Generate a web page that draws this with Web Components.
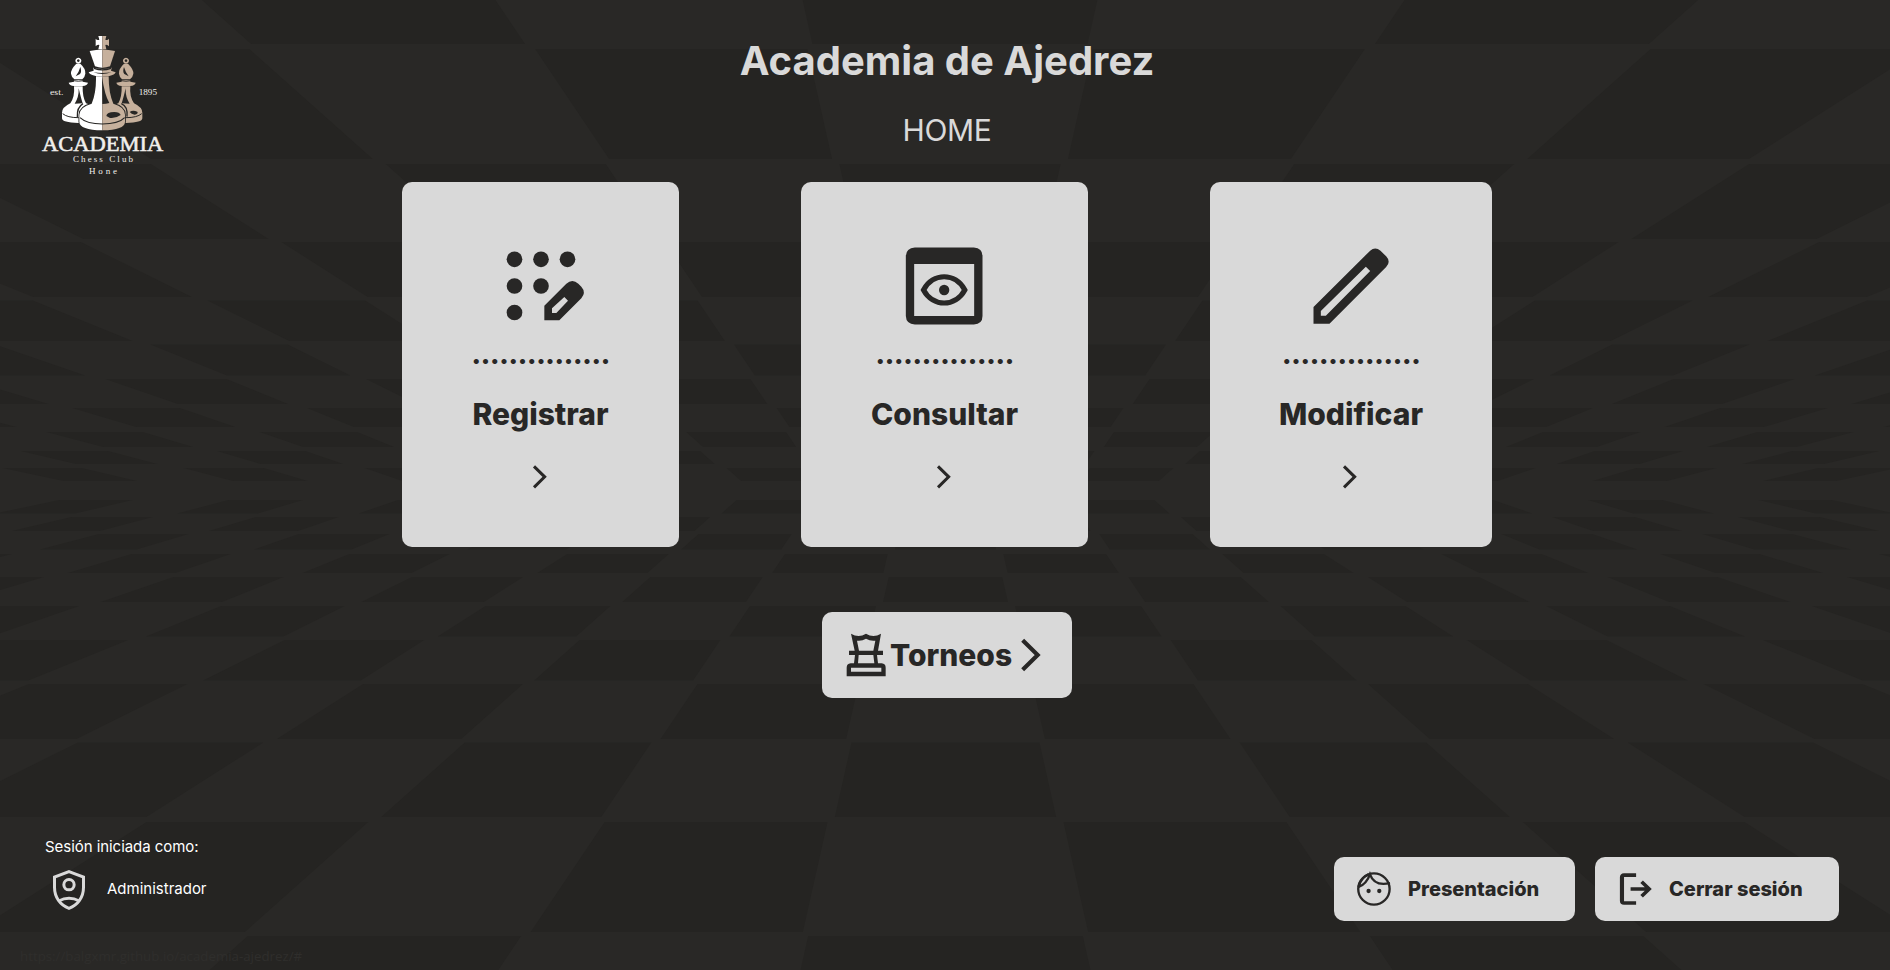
<!DOCTYPE html>
<html lang="es">
<head>
<meta charset="utf-8">
<title>Academia de Ajedrez</title>
<style>
  html, body { margin: 0; height: 100%; background: #292826; overflow: hidden; }
  body { font-family: Inter, "Liberation Sans", sans-serif; }
</style>
</head>
<body>
<home-page></home-page>

<template id="t-logo">
  <style>
    :host { display: block; width: 150px; height: 165px; }
    svg { display: block; width: 100%; height: 100%; }
    text { font-family: "Liberation Serif", serif; fill: #f1efec; }
  </style>
  <svg viewBox="0 0 450 495">
    <defs>
      <g id="bishop">
        <path fill-rule="evenodd" d="M145 113a9 9 0 1 0 .1 0ZM145 118a4 4 0 1 1-.1 0Z"/>
        <path d="M139 131H151Q168 147 166 161Q164 173 157 178H133Q125 173 123 161Q122 148 139 131Z"/>
        <path d="M132 180H158V185L174 188Q172 196 158 198H132Q118 196 116 188L132 185Z"/>
        <path d="M132 199H158Q157 230 168 250Q196 258 196 278V295Q196 308 145 309Q96 308 96 295V278Q96 262 121 250Q135 230 132 199Z"/>
        <path d="M146 205Q153 235 158 250L134 251Q147 232 146 205ZM151 141Q156 155 150 162L137 169Q147 156 151 141Z" fill="#282725"/>
        <path d="M98 281Q112 293 145 293Q180 293 194 281M130 182Q145 185 160 182" fill="none" stroke="#282725" stroke-width="3"/>
      </g>
      <g id="king">
        <path d="M205 48H229L226 59Q233 62 237 56V79Q232 73 226 75L229 88H205L208 75Q201 73 197 79V56Q201 62 208 59Z"/>
        <path d="M179 93Q217 84 255 93L240 139Q217 147 195 139Z"/>
        <path d="M190 143Q217 151 245 143L243 152L257 157Q254 165 238 168H197Q180 165 176 157L191 152Z"/>
        <path d="M198 169H236Q236 220 250 251Q285 261 285 284V306Q284 330 217 331Q149 330 148 306V284Q149 261 185 251Q199 220 198 169Z"/>
      </g>
      <clipPath id="left"><rect x="100" y="30" width="117" height="320"/></clipPath>
      <clipPath id="right"><rect x="217" y="30" width="120" height="320"/></clipPath>
    </defs>
    <use href="#bishop" fill="#fff"/>
    <use href="#bishop" fill="#c6b09c" transform="translate(433) scale(-1 1)"/>
    <path d="M274 251Q294 259 291 290M159 251Q140 262 142 292" stroke="#282725" stroke-width="4" fill="none"/>
    <use href="#king" stroke="#282725" stroke-width="5"/>
    <use href="#king" fill="#fff" clip-path="url(#left)"/>
    <use href="#king" fill="#c6b09c" clip-path="url(#right)"/>
    <g fill="#282725">
      <path d="M190 157Q217 167 244 157Q218 161 190 157ZM216 170Q224 225 238 249Q228 252 217 252Z"/>
      <path d="M229 288Q230 276 253 276Q269 276 272 285Q257 296 240 294Z"/>
      <path d="M299 276Q308 269 322 275Q326 281 314 284Q304 283 299 276Z"/>
    </g>
    <path d="M150 293Q170 312 217 312Q266 312 284 293M192 145Q217 154 243 145" fill="none" stroke="#282725" stroke-width="3.5"/>
    <text x="60" y="225" font-size="24" textLength="40" lengthAdjust="spacingAndGlyphs">est.</text>
    <text x="326" y="225" font-size="24" textLength="55" lengthAdjust="spacingAndGlyphs">1895</text>
    <text x="36" y="392" font-size="62" textLength="364" lengthAdjust="spacingAndGlyphs" stroke="#f1efec" stroke-width="1.6">ACADEMIA</text>
    <text x="129" y="427" font-size="27" textLength="180">Chess Club</text>
    <text x="177" y="461" font-size="27" textLength="84">Hone</text>
  </svg>
</template>

<template id="t-card">
  <style>
    :host { display: flex; flex-direction: column; align-items: center; box-sizing: border-box; height: 365px;
      padding-top: 54px; background: #d9d9d9; color: #282726; border-radius: 10px; font-weight: 800; font-size: 30px; line-height: 36px; }
    .icon { width: 100px; height: 100px; }
    .dots { font-weight: 700; letter-spacing: -0.78px; margin-top: -1px; }
    .title { margin: 25px 0 25px; }
    .chev { width: 40px; height: 40px; display: block; }
  </style>
  <div class="icon"><slot name="icon"></slot></div>
  <div class="dots">...............</div>
  <div class="title"><slot></slot></div>
  <svg class="chev" viewBox="394 861 120 120"><path d="M433 889 465 920.5 433 952" fill="none" stroke="#282726" stroke-width="9"/></svg>
</template>

<template id="t-button">
  <style>
    :host { display: flex; align-items: center; box-sizing: border-box; height: 64px; padding-left: 20px;
      background: #d9d9d9; color: #282726; border-radius: 10px; font-weight: 800; font-size: 20px; line-height: 24px; white-space: nowrap; }
    :host([large]) { height: 86px; font-size: 30px; line-height: 36px; }
    .label { margin-left: 14px; }
    :host([large]) .label { margin-left: 0; width: 122px; }
  </style>
  <slot name="icon"></slot><span class="label"><slot></slot></span><slot name="end"></slot>
</template>

<template id="t-user">
  <style>
    :host { display: block; color: #fff; font-size: 15px; line-height: 20px; }
    .who { letter-spacing: -0.05px; }
    .row { display: flex; align-items: center; margin-top: 13px; padding-left: 4px; }
    .row span { margin-top: -2px; }
    svg { width: 40px; height: 40px; display: block; margin-right: 18px; }
  </style>
  <div class="who">Sesión iniciada como:</div>
  <div class="row">
    <svg viewBox="147 150 120 120" fill="none" stroke="#d9d9d9" stroke-width="9"><path d="M207 155 250.500 171V202C250.500 232 233 256 207 265 181 256 163.500 232 163.500 202V171Z"/><circle cx="207" cy="194" r="15.500"/><path d="M176 243Q207 227 238 243"/></svg>
    <span><slot></slot></span>
  </div>
</template>

<template id="t-board">
  <style>:host { display: block; } svg { display: block; }</style>
  <svg width="1890" height="970" viewBox="0 0 1890 970"><rect width="1890" height="970" fill="#292826"/><path fill="#252422"/></svg>
</template>

<template id="t-page">
  <style>
    :host { display: grid; width: 1890px; height: 970px; overflow: hidden; }
    :host > * { grid-area: 1 / 1; }
    .layout { display: grid; grid-template-rows: 832px 111px 27px; z-index: 1; }
    .top { display: grid; grid-template-columns: 402px 1090px 398px; }
    chess-logo { margin: 20px 0 0 30px; }
    main { display: flex; flex-direction: column; align-items: center; color: #d9d9d9; }
    h1 { margin: 37px 0 0; font-size: 40px; line-height: 48px; font-weight: 700; white-space: nowrap; }
    h2 { margin: 27px 0 0; font-size: 30px; line-height: 36px; font-weight: 400; letter-spacing: -0.3px; }
    .cards { display: flex; gap: 122px; margin-top: 34px; }
    .cards svg { width: 100px; height: 100px; display: block; }
    chess-button { flex: none; }
    .torneos { width: 250px; margin-top: 65px; }
    .torneos svg { width: 48px; height: 48px; flex: none; }
    .bottom { display: flex; justify-content: space-between; padding: 5px 51px 0 45px; }
    .actions { display: flex; gap: 20px; margin-top: 20px; }
    .actions svg { width: 40px; height: 40px; }
    .status { box-sizing: border-box; width: 309px; margin-left: 8px; padding-left: 12px; font: 13.3px/27px "Open Sans", sans-serif; color: #2f2e2c; white-space: nowrap; }
  </style>
  <chess-board></chess-board>
  <div class="layout">
    <div class="top">
      <chess-logo></chess-logo>
      <main>
        <h1>Academia de Ajedrez</h1>
        <h2>HOME</h2>
        <div class="cards">
          <action-card style="width:277px">
            <svg slot="icon" viewBox="303 198 300 300" fill="#282726"><circle cx="373.500" cy="268" r="23.500"/><circle cx="453" cy="268" r="23.500"/><circle cx="532.500" cy="268" r="23.500"/><circle cx="373.500" cy="348" r="23.500"/><circle cx="453" cy="348" r="23.500"/><circle cx="373.500" cy="427.500" r="23.500"/><path fill-rule="evenodd" d="M463 407 529 341Q547 325 565 341L574 350Q589 367 574 385L508 451H463ZM486 415V429H499L534 392 523 381Z"/></svg>
            Registrar
          </action-card>
          <action-card style="width:287px">
            <svg slot="icon" viewBox="314.500 198 300 300" fill="#282726"><path fill-rule="evenodd" d="M374 232.500H551Q577 234 577 258V438Q577 462 551 463.500H374Q348 462 347 438V258Q348 234 374 232.500ZM372 282V438H552V282Z"/><path d="M400 360C428 307 496 307 524 360 496 412 428 412 400 360Z" fill="none" stroke="#282726" stroke-width="15.500"/><circle cx="462" cy="360" r="15.500"/></svg>
            Consultar
          </action-card>
          <action-card style="width:282px">
            <svg slot="icon" viewBox="303.500 198 300 300" fill="#282726"><path fill-rule="evenodd" d="M341 411 511 242Q526 229 542 242L559 259Q574 275 559 291L389 461H341ZM363 423V437H378L511 303 498 290Z"/></svg>
            Modificar
          </action-card>
        </div>
        <chess-button large class="torneos">
          <svg slot="icon" viewBox="126 93 144 144" fill="#282726"><path fill-rule="evenodd" d="M153 101Q176 115 198 101 220 115 243 101L234 152H249V165H231L234 190H245Q257 191 257 203V229H140V203Q140 191 152 190H162L165 165H147V152H164ZM171 122 177 152H220L226 122Q211 124 198 116 186 124 171 122ZM176 165 174 190H223L220 165ZM153 203V215H244V203Z"/></svg>
          Torneos
          <svg slot="end" viewBox="636 93 144 144"><path d="M668 121 713 165 668 209" fill="none" stroke="#282726" stroke-width="12.500"/></svg>
        </chess-button>
      </main>
    </div>
    <div class="bottom">
      <session-user>Administrador</session-user>
      <div class="actions">
        <chess-button style="width:241px">
          <svg slot="icon" viewBox="98.700 87 116 120" preserveAspectRatio="none" fill="none" stroke="#282726" stroke-width="6.800"><ellipse cx="156.500" cy="147" rx="45.500" ry="47"/><path d="M112 141Q135 132 145 103Q158 140 203 129M141 103Q117 116 112 141"/><g fill="#282726" stroke="none"><ellipse cx="141" cy="153" rx="6.300" ry="6.500"/><ellipse cx="172" cy="153" rx="6.300" ry="6.500"/></g></svg>
          Presentación
        </chess-button>
        <chess-button style="width:244px">
          <svg slot="icon" viewBox="853.800 87 116 120" preserveAspectRatio="none"><path fill="#282726" d="M915 99.500H880Q868 100 868 112V182Q868 194 880 194.500H915V184H880V111H915Z"/><path fill="none" stroke="#282726" stroke-width="10.500" d="M899 147H953M931 125 953 147 931 169"/></svg>
          Cerrar sesión
        </chess-button>
      </div>
    </div>
    <div class="status">https://balgxmr.github.io/academia-ajedrez/#</div>
  </div>
</template>

<script>
  const define = (name, id, setup) => customElements.define(name, class extends HTMLElement {
    constructor() {
      super();
      const root = this.attachShadow({ mode: 'open' });
      root.append(document.getElementById(id).content.cloneNode(true));
      if (setup) setup(root);
    }
  });

  // Floor and ceiling tiles; columns widen linearly with distance from the horizon.
  const HORIZON = 490.5;
  const ceiling = [[0, 44], [49, 159], [164, 239], [242, 297], [300.5, 341], [344.5, 375.5], [379, 404], [408, 427], [432, 447], [451, 464], [468, 481]];
  const floor = [[936, 970], [822, 932], [742.5, 817], [684, 739], [640, 680.5], [606, 636.5], [577, 602], [554, 573], [534, 549.5], [517, 531], [500, 513.5]];
  const colWidth = y => 80.7 + 0.4485 * Math.abs(y - HORIZON);
  function drawBoard(root) {
    let d = '';
    const paint = (rows, cx) => rows.forEach(([y1, y2], i) => {
      for (let k = -14 + (i % 2); k <= 14; k += 2) {
        const inset = 3 + Math.abs(k) * 0.3;
        const x = (y, side) => (cx + (k + side * 0.5) * colWidth(y) - side * inset).toFixed(1);
        d += `M${x(y1, -1)} ${y1}L${x(y1, 1)} ${y1}L${x(y2, 1)} ${y2}L${x(y2, -1)} ${y2}Z`;
      }
    });
    paint(ceiling, 950);
    paint(floor, 945.5);
    root.querySelector('path').setAttribute('d', d);
  }

  define('chess-board', 't-board', drawBoard);
  define('chess-logo', 't-logo');
  define('action-card', 't-card');
  define('chess-button', 't-button');
  define('session-user', 't-user');
  define('home-page', 't-page');
</script>
</body>
</html>
